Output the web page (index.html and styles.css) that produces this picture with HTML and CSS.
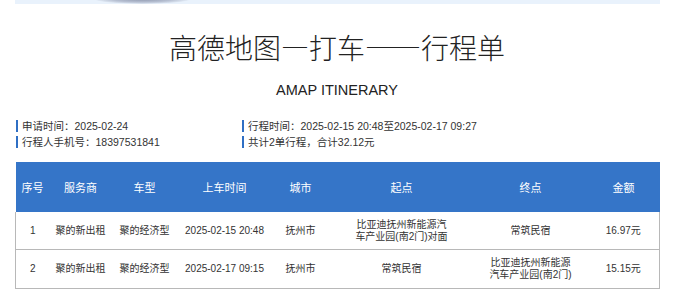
FILE: index.html
```html
<!DOCTYPE html>
<html lang="zh">
<head>
<meta charset="utf-8">
<link rel="stylesheet" href="styles.css">
</head>
<body>
<div class="page">
  <div class="banner"><div class="banner-glow"></div></div>
  <h1 class="title">高德地图—打车——行程单</h1>
  <div class="subtitle">AMAP ITINERARY</div>
  <div class="info">
    <div class="info-item">申请时间：2025-02-24</div>
    <div class="info-item">行程时间：2025-02-15 20:48至2025-02-17 09:27</div>
    <div class="info-item">行程人手机号：18397531841</div>
    <div class="info-item">共计2单行程，合计32.12元</div>
  </div>
  <table class="trips">
    <colgroup>
      <col class="c1"><col class="c2"><col class="c3"><col class="c4">
      <col class="c5"><col class="c6"><col class="c7"><col class="c8">
    </colgroup>
    <thead>
      <tr><th>序号</th><th>服务商</th><th>车型</th><th>上车时间</th><th>城市</th><th>起点</th><th>终点</th><th>金额</th></tr>
    </thead>
    <tbody>
      <tr><td>1</td><td>聚的新出租</td><td>聚的经济型</td><td>2025-02-15 20:48</td><td>抚州市</td><td>比亚迪抚州新能源汽<br>车产业园(南2门)对面</td><td>常筑民宿</td><td>16.97元</td></tr>
      <tr><td>2</td><td>聚的新出租</td><td>聚的经济型</td><td>2025-02-17 09:15</td><td>抚州市</td><td>常筑民宿</td><td>比亚迪抚州新能源<br>汽车产业园(南2门)</td><td>15.15元</td></tr>
    </tbody>
  </table>
</div>
</body>
</html>
```

FILE: styles.css
```css
html, body {
  margin: 0;
  padding: 0;
  background: #ffffff;
}
body {
  font-family: "Liberation Sans", "Noto Sans CJK SC", sans-serif;
  color: #333333;
}
.page {
  width: 644px;
  margin-left: 15px;
}
.banner {
  position: relative;
  height: 4px;
  background: #e9f2fc;
  margin-right: -1px;
}
.banner-glow {
  position: absolute;
  left: 80px;
  top: -6px;
  width: 95px;
  height: 10px;
  border-radius: 50%;
  background: radial-gradient(ellipse at center, #8c96ad 0%, #b7c0d2 45%, rgba(233,242,252,0) 75%);
}
.title {
  margin: 22px 0 0 0;
  height: 42px;
  font-family: "Noto Sans CJK SC", sans-serif;
  font-weight: 300;
  font-size: 28px;
  line-height: 42px;
  text-align: center;
  color: #222222;
}
.subtitle {
  margin-top: 15px;
  font-size: 14.5px;
  line-height: 14px;
  text-align: center;
  color: #222222;
}
.info {
  margin-top: 23px;
  display: grid;
  grid-template-columns: 226px 1fr;
  row-gap: 4px;
}
.info-item {
  font-size: 10.5px;
  line-height: 12px;
  border-left: 2px solid #2f6fc4;
  padding-left: 4px;
  margin-left: 1px;
  color: #333333;
}
.trips {
  margin-top: 14px;
  width: 644px;
  border-collapse: collapse;
  table-layout: fixed;
}
.c1 { width: 34px; }
.c2 { width: 62px; }
.c3 { width: 66px; }
.c4 { width: 94px; }
.c5 { width: 58px; }
.c6 { width: 144px; }
.c7 { width: 114px; }
.c8 { width: 72px; }
.trips th {
  background: #3575c8;
  color: #ffffff;
  font-weight: normal;
  font-size: 11px;
  height: 50px;
  padding: 0;
  text-align: center;
}
.trips td {
  font-size: 10px;
  line-height: 12px;
  text-align: center;
  padding: 0;
  height: 37px;
  border-bottom: 1px solid #b8b8b8;
  color: #333333;
}
.trips tbody tr td:first-child {
  border-left: 1px solid #b8b8b8;
}
.trips tbody tr td:last-child {
  border-right: 1px solid #b8b8b8;
}
.trips tbody tr:last-child td {
  height: 38px;
}
```
